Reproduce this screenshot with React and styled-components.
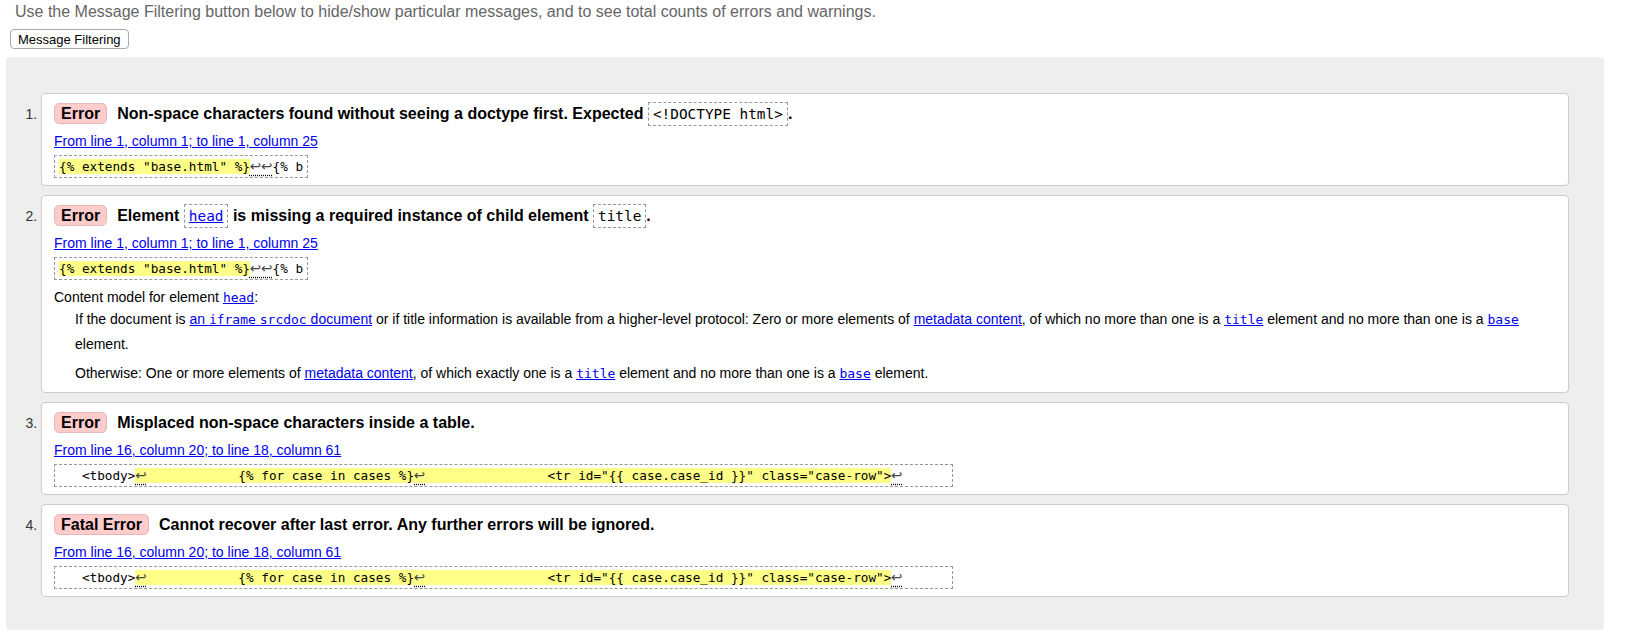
import React from 'react'
import styled, { createGlobalStyle } from 'styled-components'

const GlobalStyle = createGlobalStyle`
  body {
    margin: 0;
    background: #fff;
    font-family: "Liberation Sans", Arial, sans-serif;
  }
`

const Page = styled.div`
  padding: 2px 22px 11px 6px;
`

const Intro = styled.p`
  margin: 0 0 0 9px;
  font-size: 16px;
  line-height: 19px;
  color: #666;
`

const FilterButton = styled.button`
  display: block;
  margin: 8px 0 0 4px;
  height: 20px;
  padding: 0 7px;
  font-family: "Liberation Sans", Arial, sans-serif;
  font-size: 13px;
  color: #000;
  background: #fff;
  border: 1px solid #aaa;
  border-radius: 4px;
`

const Panel = styled.div`
  margin-top: 8px;
  background: #eee;
  border-radius: 4px;
  padding: 36px 35px 24px 0;
`

const Messages = styled.ol`
  margin: 0;
  padding: 0 0 0 35px;
`

const Card = styled.li`
  background: #fff;
  border: 1px solid #ccc;
  border-radius: 4px;
  padding: 7px 12px;
  margin-bottom: 9px;
  font-size: 14px;
  color: #333;

  &::marker {
    font-size: 14px;
    color: #333;
  }
`

const Message = styled.p`
  margin: 0;
  font-size: 16px;
  font-weight: bold;
  line-height: 25px;
  color: #000;
`

const Badge = styled.strong`
  display: inline-block;
  line-height: 19px;
  padding: 0 6px;
  margin-right: 10px;
  background: #fcc;
  border: 1px solid #e8b8b8;
  border-radius: 5px;
`

const CodeRef = styled.code`
  display: inline-block;
  font-family: "DejaVu Sans Mono", monospace;
  font-size: 14.4px;
  font-weight: normal;
  line-height: 18px;
  padding: 2px 4px;
  border: 1px dashed #999;
  color: #000;
`

const Link = styled.a`
  color: #00e;
  text-decoration: underline;
`

const Location = styled.a`
  display: block;
  margin-top: 7px;
  width: fit-content;
  font-size: 14px;
  line-height: 17px;
  color: #00e;
  text-decoration: underline;
`

const Extract = styled.p`
  margin: 5px 0 0;
  width: fit-content;
  white-space: pre;
  font-family: "DejaVu Sans Mono", monospace;
  font-size: 12.7px;
  line-height: 17px;
  padding: 2px 4px;
  border: 1px dashed #999;
  color: #000;
`

const Hl = styled.mark`
  background: #ff8;
  color: inherit;
`

const Lf = styled.b`
  font-family: "DejaVu Sans", sans-serif;
  font-weight: normal;
  font-size: 13.5px;
  color: #444;
  text-decoration: underline dotted #000;
  text-underline-offset: 4px;
`

const Prose = styled.p`
  margin: 8px 0 0;
  font-size: 14px;
  line-height: 18px;
  color: #000;
`

const Models = styled.dl`
  margin: 0 0 -1px;
`

const Model = styled.dd`
  margin: 0 0 0 21px;
  font-size: 14px;
  line-height: 25px;
  color: #000;

  & + & {
    margin-top: 4px;
  }
`

const Mono = styled.code`
  font-family: "DejaVu Sans Mono", monospace;
  font-size: 13px;
`

const LF = () => <Lf>↩</Lf>

const tableExtract = (
  <Extract>
    {'   <tbody>'}
    <Hl>
      <LF />
      {'            {% for case in cases %}'}
      <LF />
      {'                <tr id="{{ case.case_id }}" class="case-row">'}
    </Hl>
    <LF />
    {'      '}
  </Extract>
)

const baseExtract = (
  <Extract>
    <Hl>{'{% extends "base.html" %}'}</Hl>
    <LF />
    <LF />
    {'{% b'}
  </Extract>
)

const App = () => {
  return (
    <Page>
      <GlobalStyle />
      <Intro>
        Use the Message Filtering button below to hide/show particular messages, and to see total counts of errors and warnings.
      </Intro>
      <FilterButton>Message Filtering</FilterButton>
      <Panel>
        <Messages>
          <Card>
            <Message>
              <Badge>Error</Badge>
              Non-space characters found without seeing a doctype first. Expected <CodeRef>{'<!DOCTYPE html>'}</CodeRef>.
            </Message>
            <Location href="#l1">From line 1, column 1; to line 1, column 25</Location>
            {baseExtract}
          </Card>

          <Card>
            <Message>
              <Badge>Error</Badge>
              Element <CodeRef><Link href="#head">head</Link></CodeRef> is missing a required instance of child element <CodeRef>title</CodeRef>.
            </Message>
            <Location href="#l1b">From line 1, column 1; to line 1, column 25</Location>
            {baseExtract}
            <Prose>
              Content model for element <Link href="#head"><Mono>head</Mono></Link>:
            </Prose>
            <Models>
              <Model>
                If the document is <Link href="#srcdoc">an <Mono>iframe</Mono> <Mono>srcdoc</Mono> document</Link> or if title information is available from a higher-level protocol: Zero or more elements of <Link href="#metadata">metadata content</Link>, of which no more than one is a <Link href="#title"><Mono>title</Mono></Link> element and no more than one is a <Link href="#base"><Mono>base</Mono></Link> element.
              </Model>
              <Model>
                Otherwise: One or more elements of <Link href="#metadata">metadata content</Link>, of which exactly one is a <Link href="#title"><Mono>title</Mono></Link> element and no more than one is a <Link href="#base"><Mono>base</Mono></Link> element.
              </Model>
            </Models>
          </Card>

          <Card>
            <Message>
              <Badge>Error</Badge>
              Misplaced non-space characters inside a table.
            </Message>
            <Location href="#l16">From line 16, column 20; to line 18, column 61</Location>
            {tableExtract}
          </Card>

          <Card>
            <Message>
              <Badge>Fatal Error</Badge>
              Cannot recover after last error. Any further errors will be ignored.
            </Message>
            <Location href="#l16b">From line 16, column 20; to line 18, column 61</Location>
            {tableExtract}
          </Card>
        </Messages>
      </Panel>
    </Page>
  )
}

export default App
